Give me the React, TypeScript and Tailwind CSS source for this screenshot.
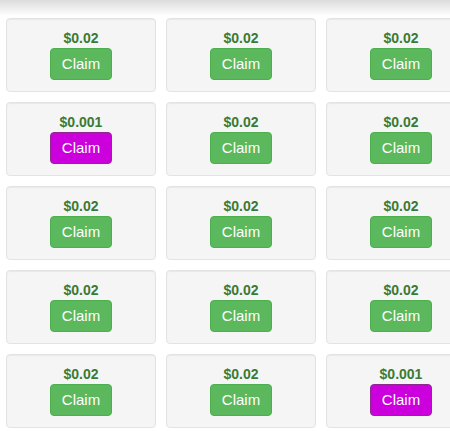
import React from "react";

type Item = { price: string; special: boolean };

const items: Item[] = Array.from({ length: 15 }, (_, i) => {
  const special = i === 3 || i === 14;
  return { price: special ? "$0.001" : "$0.02", special };
});

export default function App() {
  return (
    <div
      className="w-[450px] h-[431px] overflow-hidden bg-white"
      style={{ fontFamily: '"Liberation Sans", Arial, sans-serif' }}
    >
      <div className="h-[16px] bg-gradient-to-b from-[#dcdcdc] to-white" />
      <div className="pl-[6px] pt-[2px] grid grid-cols-[repeat(3,150px)] gap-[10px] w-[476px]">
        {items.map((it, i) => (
          <div
            key={i}
            className="h-[74px] rounded-[4px] border border-[#e3e3e3] bg-[#f5f5f5] shadow-[inset_0_1px_1px_rgba(0,0,0,0.05)] flex flex-col items-center pt-[10px]"
          >
            <div className="text-[14px] leading-[19px] font-bold text-[#3a7a34]">
              {it.price}
            </div>
            <button
              className={
                it.special
                  ? "w-[62px] h-[32px] rounded-[4px] border border-[#8e2a8e] bg-[#cc00dd] text-white text-[15px] leading-[20px] flex items-center justify-center"
                  : "w-[62px] h-[32px] rounded-[4px] border border-[#4cae4c] bg-[#5cb85c] text-white text-[15px] leading-[20px] flex items-center justify-center"
              }
            >
              Claim
            </button>
          </div>
        ))}
      </div>
    </div>
  );
}
